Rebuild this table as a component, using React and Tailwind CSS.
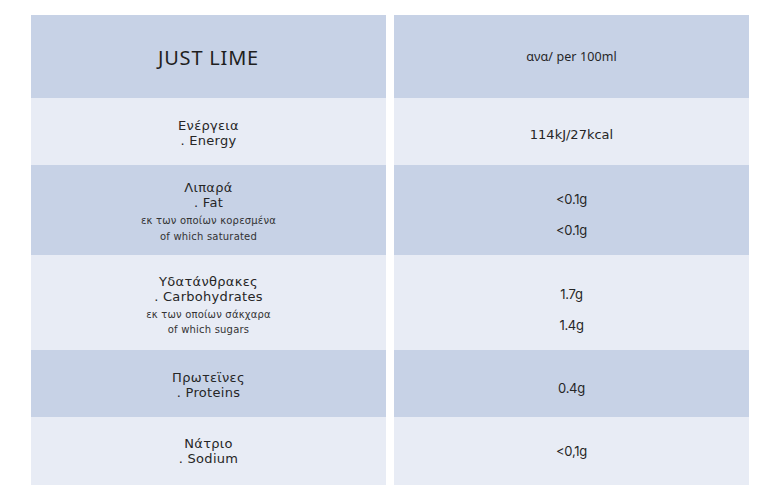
import React from "react";

const dark = "bg-[#c7d2e6]";
const light = "bg-[#e8ecf5]";

const rows = [
  { h: "h-[67px]", bg: light, label: ["Ενέργεια", ". Energy"], sub: [], values: ["114kJ/27kcal"], rounded: true, lpt: "pt-[3px]", vpt: "pt-[6px]" },
  { h: "h-[90px]", bg: dark, label: ["Λιπαρά", ". Fat"], sub: ["εκ των οποίων κορεσμένα", "of which saturated"], values: ["<0.1g", "<0.1g"], lpt: "pt-[4px]", vpt: "pt-[8px]" },
  { h: "h-[95px]", bg: light, label: ["Υδατάνθρακες", ". Carbohydrates"], sub: ["εκ των οποίων σάκχαρα", "of which sugars"], values: ["1.7g", "1.4g"], lpt: "pt-[6px]", vpt: "pt-[13px]" },
  { h: "h-[67px]", bg: dark, label: ["Πρωτεϊνες", ". Proteins"], sub: [], values: ["0.4g"], lpt: "pt-[2px]", vpt: "pt-[8px]" },
  { h: "h-[68px]", bg: light, label: ["Νάτριο", ". Sodium"], sub: [], values: ["<0,1g"], lpt: "pt-0", vpt: "pt-0" },
];

export default function App() {
  return (
    <div className="w-[768px] h-[502px] bg-white pl-[31px] pt-[15px] text-[#262626] font-['DejaVu_Sans',sans-serif]">
      <div className="grid grid-cols-[355px_355px] gap-x-2">
        <div className={`h-[83px] ${dark} flex items-center justify-center`}>
          <span className="text-[20px] font-normal tracking-[0.8px] leading-none pt-[2px] font-['Noto_Sans',sans-serif] text-[#1f1f1f]">JUST LIME</span>
        </div>
        <div className={`h-[83px] ${dark} flex items-center justify-center`}>
          <span className="text-[12.5px] leading-none pt-[2px] font-['Noto_Sans',sans-serif] tracking-[0.1px]">ανα/ per 100ml</span>
        </div>
        {rows.map((r, i) => (
          <React.Fragment key={i}>
            <div className={`${r.h} ${r.bg} flex flex-col items-center justify-center ${r.lpt} text-center`}>
              {r.label.map((t, j) => (
                <div key={j} className="text-[13px] leading-[15px] tracking-[0.3px]">{t}</div>
              ))}
              {r.sub.length > 0 && (
                <div className="mt-[3px] flex flex-col items-center">
                  {r.sub.map((t, j) => (
                    <div key={j} className="text-[10px] leading-[15.5px] text-[#333] tracking-[0.2px]">{t}</div>
                  ))}
                </div>
              )}
            </div>
            <div className={`${r.h} ${r.bg} flex flex-col items-center justify-center gap-[15px] ${r.vpt} text-center`}>
              {r.values.map((v, j) => (
                <div
                  key={j}
                  className={
                    r.rounded
                      ? "text-[13px] leading-[16px]"
                      : "text-[13px] leading-[16px] font-['Inter',sans-serif] tracking-[-0.3px]"
                  }
                >
                  {v}
                </div>
              ))}
            </div>
          </React.Fragment>
        ))}
      </div>
    </div>
  );
}
